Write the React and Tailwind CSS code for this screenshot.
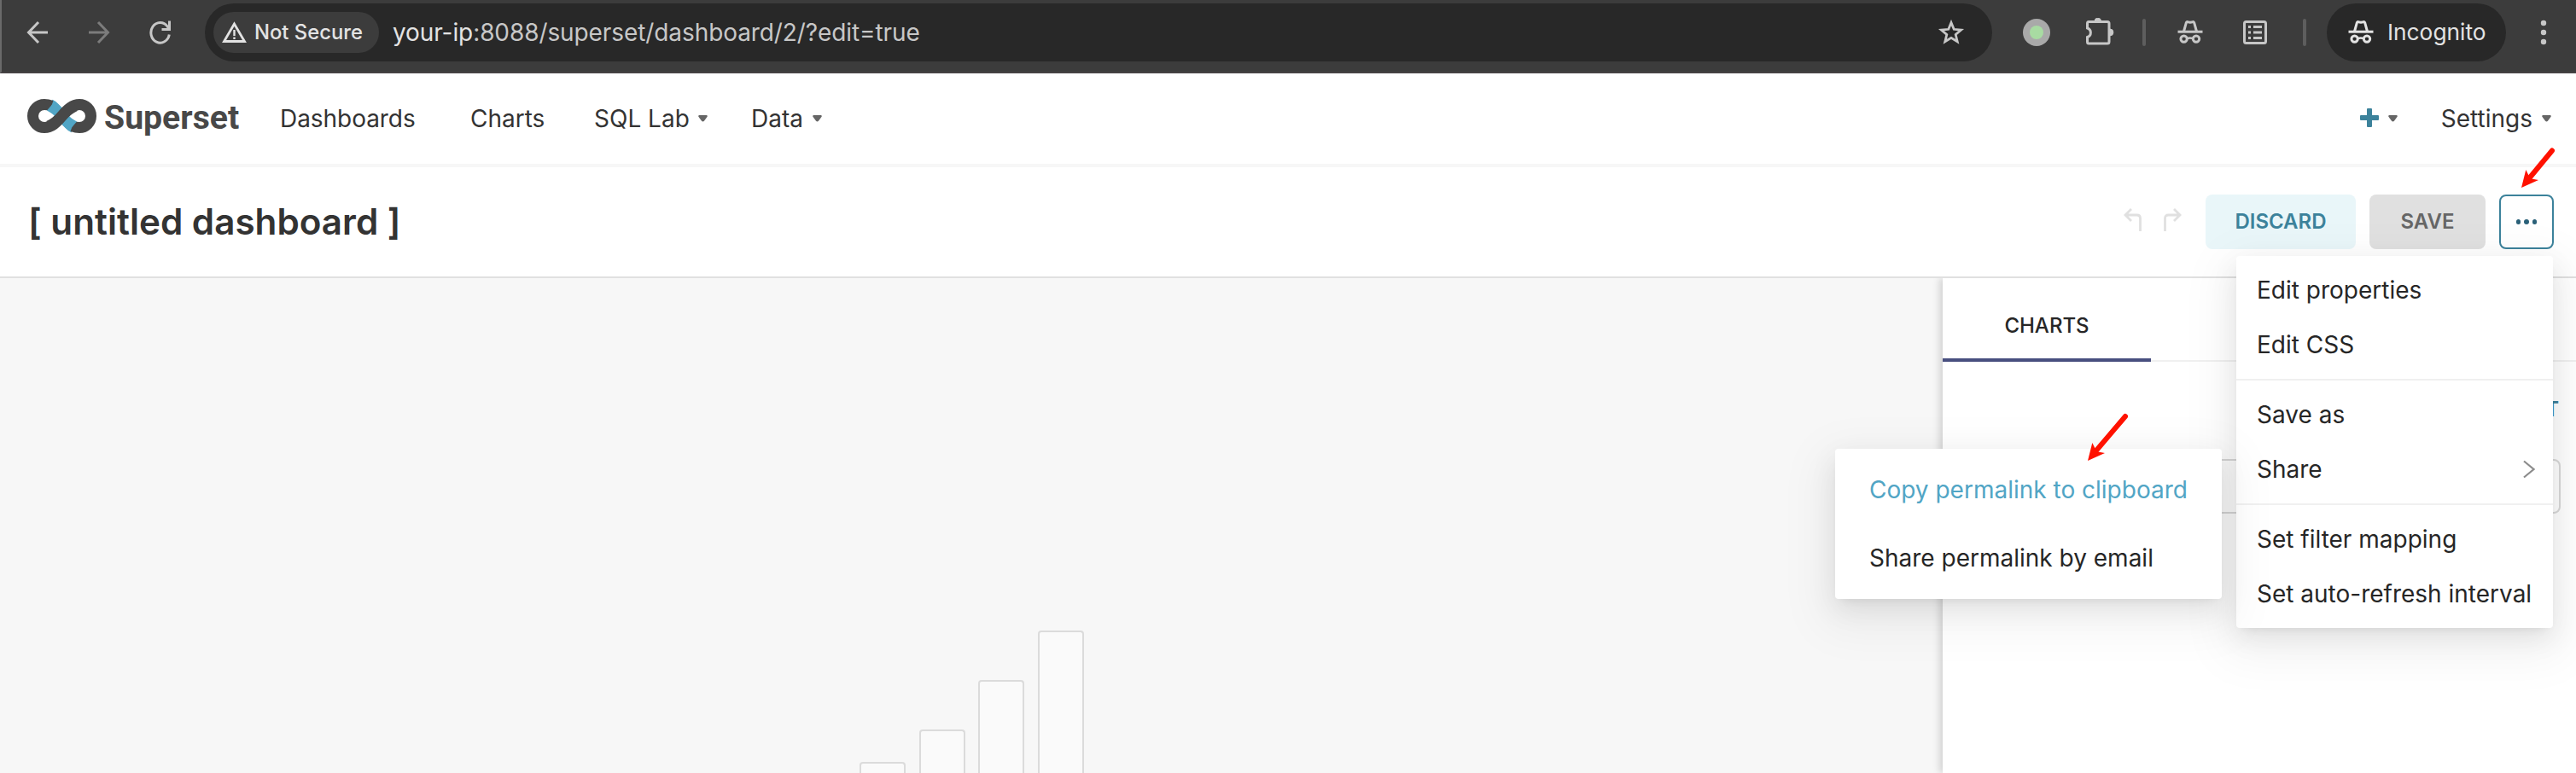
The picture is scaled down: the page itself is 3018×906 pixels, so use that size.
const font = "font-['Inter','Liberation_Sans',sans-serif]";

function Caret({ className = "" }) {
  return (
    <svg width="11" height="8" viewBox="0 0 12 8" preserveAspectRatio="none" className={`shrink-0 ${className}`}>
      <path d="M1.5 0h9c1 0 1.600 1 .9 2L7.600 6.800c-.8 1-2.400 1-3.200 0L.6 2C-.1 1 .5 0 1.500 0z" fill="#666" />
    </svg>
  );
}

function IncognitoIcon({ color, className = "" }) {
  return (
    <svg width="30" height="30" viewBox="0 0 30 30" fill="none" className={`shrink-0 ${className}`}>
      <path d="M0.5 14.200h29" stroke={color} strokeWidth="3" />
      <path d="M7.6 13.5 10.4 3.4c.3-.9 1-1 1.7-.7 2 .8 3.800.8 5.800 0 .7-.3 1.400-.2 1.700.7l2.800 10.100" stroke={color} strokeWidth="3" />
      <circle cx="7.600" cy="22.600" r="3.700" stroke={color} strokeWidth="3" />
      <circle cx="22" cy="22.600" r="3.700" stroke={color} strokeWidth="3" />
      <path d="M11 22.200c2.500-1 5-1 7.600 0" stroke={color} strokeWidth="2.600" />
    </svg>
  );
}

function BrowserBar() {
  return (
    <div className="flex h-[86px] shrink-0 items-start border-b-2 border-l-2 border-b-[#454243] border-l-[#6a6a6a] bg-[#3c3c3c] pt-1">
      <div className="flex h-[68px] w-[238px] shrink-0 items-center">
        <svg width="26" height="28" viewBox="0 0 26 28" fill="none" stroke="#c7c7c7" strokeWidth="3" className="ml-[29px]">
          <path d="M25 14H3M14 2 2.500 14 14 26" />
        </svg>
        <svg width="26" height="28" viewBox="0 0 26 28" fill="none" stroke="#7c7c7c" strokeWidth="3" className="ml-[46px]">
          <path d="M1 14h22M12 2l11.500 12L12 26" />
        </svg>
        <svg width="26" height="28" viewBox="0 0 26 28" fill="none" stroke="#c7c7c7" strokeWidth="3" className="ml-[46px]">
          <path d="M23.300 16.500A10.800 11.800 0 1 1 21 6.800L23.500 10M23.500 0.500V10.500H14.500" />
        </svg>
      </div>
      <div className="flex h-[68px] w-[2094px] shrink-0 items-center rounded-full bg-[#282828] pl-[10px]">
        <div className="flex h-12 w-[194px] items-center rounded-full bg-[#3c3c3c] pl-[10px]">
          <svg width="29" height="26" viewBox="0 0 29 26" fill="none" stroke="#e3e3e3" className="shrink-0">
            <path d="M14.500 3 2.500 23.500h24z" strokeWidth="2.800" />
            <path d="M14.500 10v7M14.500 18.500v2.500" strokeWidth="2.400" />
          </svg>
          <span className="ml-[9px] whitespace-nowrap text-[23.800px] font-medium text-[#e3e3e3]">Not Secure</span>
        </div>
        <div className="ml-4 grow whitespace-nowrap text-[28px] tracking-[-0.090px] text-[#c7c7c7]">
          <span className="text-[#e3e3e3]">your-ip</span>:8088/superset/dashboard/2/?edit=true
        </div>
        <svg width="32" height="32" viewBox="0 0 32 32" fill="none" stroke="#c7c7c7" strokeWidth="2.800" className="mr-8">
          <path d="M16 4.500l3.200 7.800 8.400.7-6.400 5.500 2 8.200-7.200-4.400-7.200 4.400 2-8.200-6.400-5.500 8.400-.7z" />
        </svg>
      </div>
      <div className="flex h-[68px] grow items-center">
        <div className="ml-9 flex size-8 shrink-0 items-center justify-center rounded-full bg-[#a9a9a9]">
          <div className="size-4 rounded-full bg-[#a8dba2]" />
        </div>
        <svg width="34" height="34" viewBox="0 0 34 34" fill="none" className="ml-[41px] shrink-0">
          <path d="M4 4.500h22q2 0 2 2V28q0 2-2 2H4q-1.500 0-1.500-2v-5.500a5.500 5.500 0 0 0 0-10.500V6.500q0-2 1.500-2z" stroke="#c7c7c7" strokeWidth="3" />
          <path d="M11 4a3.800 3.800 0 0 1 7.600 0zM29 13a3.900 3.900 0 0 1 0 7.800z" fill="#c7c7c7" stroke="#c7c7c7" />
        </svg>
        <div className="ml-[33px] h-8 w-1 rounded-sm bg-[#5e5e5e]" />
        <IncognitoIcon color="#c7c7c7" className="ml-[37px]" />
        <svg width="28" height="28" viewBox="0 0 28 28" fill="none" stroke="#c7c7c7" strokeWidth="3" className="ml-[47px] shrink-0">
          <rect x="1.500" y="1.500" width="25" height="25" rx="2" />
          <path d="M12 7.500h10M12 14h10M12 20.500h10M6 7.500h3M6 14h3M6 20.500h3" strokeWidth="2.800" />
        </svg>
        <div className="ml-[42px] h-8 w-1 rounded-sm bg-[#5e5e5e]" />
        <div className="ml-6 flex h-[68px] w-[210px] shrink-0 items-center rounded-full bg-[#282828] pl-[25px]">
          <IncognitoIcon color="#e3e3e3" />
          <span className="ml-4 text-[26.300px] text-[#e3e3e3]">Incognito</span>
        </div>
        <svg width="8" height="30" viewBox="0 0 8 30" fill="#c7c7c7" className="ml-10 shrink-0">
          <circle cx="4" cy="4" r="3.200" />
          <circle cx="4" cy="15" r="3.200" />
          <circle cx="4" cy="26" r="3.200" />
        </svg>
      </div>
    </div>
  );
}

function Logo() {
  return (
    <svg width="84" height="42" viewBox="0 0 84 42" fill="none" strokeWidth="13" className="mb-[6px] shrink-0">
      <path d="M27.500 7.500C33 10.500 37 15.500 41.500 21S50 31.500 55.500 34.500" stroke="#51a5c5" />
      <path d="M29.300 9C26.500 8 24 7.500 21 7.500a13.500 13.500 0 0 0 0 27C29.500 34.500 35 29 41.500 21S54 7.500 62 7.500a13.500 13.500 0 0 1 0 27C59 34.500 56.500 34 53.700 33" stroke="#484848" />
      <path d="M24 14.500 33.500 3.500 41 11 33 20zM59 27.500 49.500 38.500 42 31 50 22z" fill="#51a5c5" />
      <path d="M26 33C31.500 30.500 36 27.500 41.500 21S51.500 11.500 57 9" stroke="#484848" />
    </svg>
  );
}

function NavBar() {
  return (
    <div className="flex h-[110px] shrink-0 items-center border-b-4 border-[#f7f7f7] bg-white pl-[31px] text-[28px] text-[#333]">
      <div className="flex w-[297px] shrink-0 items-center pb-px">
        <Logo />
        <span className="ml-[7px] font-['Roboto','Liberation_Sans',sans-serif] text-[39.200px] leading-none font-bold text-[#484848]">Superset</span>
      </div>
      <div className="w-[223px] shrink-0 tracking-[-0.050px]">Dashboards</div>
      <div className="w-[145px] shrink-0">Charts</div>
      <div className="flex w-[184px] shrink-0 items-center">
        SQL Lab
        <Caret className="ml-[10px]" />
      </div>
      <div className="flex grow items-center">
        Data
        <Caret className="ml-[11px]" />
      </div>
      <svg width="22" height="22" viewBox="0 0 22 22" className="mb-[3px] shrink-0">
        <path d="M8 1q0-1 1-1h4q1 0 1 1v7h7q1 0 1 1v4q0 1-1 1h-7v7q0 1-1 1H9q-1 0-1-1v-7H1q-1 0-1-1V9q0-1 1-1h7z" fill="#3c829b" />
      </svg>
      <Caret className="ml-[11px]" />
      <div className="mr-[29px] ml-[51px] flex items-center">
        Settings
        <Caret className="ml-[11px]" />
      </div>
    </div>
  );
}

function TitleBar() {
  return (
    <div className="z-20 flex h-[130px] shrink-0 items-center border-b-2 border-[#e0e0e0] bg-white pr-[26px] pl-[33px]">
      <h1 className="grow text-[42.200px] font-semibold text-[#333]">[ untitled dashboard ]</h1>
      <svg width="22" height="28" viewBox="0 0 22 28" fill="none" stroke="#e0e0e0" strokeWidth="2.800" className="mr-6 mb-1 shrink-0">
        <path d="M9 1 2 8l7 7M2 8h13.500q4 0 4 4v15" />
      </svg>
      <svg width="22" height="28" viewBox="0 0 22 28" fill="none" stroke="#e0e0e0" strokeWidth="2.800" className="mr-[28px] mb-1 shrink-0">
        <path d="M13 1l7 7-7 7M20 8H6.500q-4 0-4 4v15" />
      </svg>
      <div className="flex h-16 w-44 shrink-0 items-center justify-center rounded-lg bg-[#e9f6f9] text-2xl font-semibold text-[#3c829b]">DISCARD</div>
      <div className="ml-4 flex h-16 w-[136px] shrink-0 items-center justify-center rounded-lg bg-[#e0e0e0] text-2xl font-semibold text-[#666]">SAVE</div>
      <div className="ml-4 flex h-16 w-16 shrink-0 items-center justify-center gap-[4px] rounded-lg border-2 border-[#3c829b]">
        <i className="size-[5.500px] rounded-full bg-[#2a6078]" />
        <i className="size-[5.500px] rounded-full bg-[#2a6078]" />
        <i className="size-[5.500px] rounded-full bg-[#2a6078]" />
      </div>
    </div>
  );
}

function Canvas() {
  return (
    <div className="flex h-full w-[2276px] shrink-0 items-end gap-[15.600px] overflow-hidden bg-[#f7f7f7] pl-[1007px]">
      <div className="h-[13px] w-[54px] rounded-t-sm border-2 border-b-0 border-[#dbdbdb] bg-[#fafafa]" />
      <div className="h-[51px] w-[54px] rounded-t-sm border-2 border-b-0 border-[#dbdbdb] bg-[#fafafa]" />
      <div className="h-[109px] w-[54px] rounded-t-sm border-2 border-b-0 border-[#dbdbdb] bg-[#fafafa]" />
      <div className="h-[167px] w-[54px] rounded-t-sm border-2 border-b-0 border-[#dbdbdb] bg-[#fafafa]" />
    </div>
  );
}

function SidePanel() {
  return (
    <div className="z-10 flex grow flex-col bg-white shadow-[-4px_0_8px_0_rgba(0,0,0,0.14)]">
      <div className="flex h-[98px] shrink-0 border-b-2 border-[#f0f0f0]">
        <div className="-mb-0.5 flex h-[98px] w-[244px] items-center justify-center border-b-4 border-[#484f7f] pt-[18px] text-2xl font-medium text-[#262626]">CHARTS</div>
      </div>
      <div className="mt-[40px] flex h-8 justify-end pr-[20px] text-2xl leading-8 font-semibold whitespace-nowrap text-[#3c829b]">CREATE NEW CHART</div>
      <div className="mt-[42px] mr-[18px] ml-8 h-16 rounded-lg border-2 border-[#d9d9d9]" />
    </div>
  );
}

const menuItem = "flex h-16 items-center pl-6";
const popup =
  "absolute rounded bg-white py-2 text-[28px] whitespace-nowrap text-[#262626] shadow-[0_6px_12px_-8px_rgba(0,0,0,0.12),0_12px_32px_rgba(0,0,0,0.08),0_18px_56px_16px_rgba(0,0,0,0.05)]";

function Menu() {
  return (
    <div className={`${popup} top-[300px] left-[2620px] z-20 w-[371px]`}>
      <div className={menuItem}>Edit properties</div>
      <div className={menuItem}>Edit CSS</div>
      <div className="my-2 h-0.5 bg-[#f0f0f0]" />
      <div className={menuItem}>Save as</div>
      <div className="flex h-16 items-center justify-between pr-[21px] pl-6">
        Share
        <svg width="14" height="22" viewBox="0 0 14 22" fill="none" stroke="#8c8c8c" strokeWidth="2.200">
          <path d="M1 1.500 12.500 11 1 20.500" />
        </svg>
      </div>
      <div className="my-2 h-0.5 bg-[#f0f0f0]" />
      <div className={menuItem}>Set filter mapping</div>
      <div className={menuItem}>Set auto-refresh interval</div>
    </div>
  );
}

function SubMenu() {
  return (
    <div className={`${popup} top-[526px] left-[2150px] z-30 w-[453px]`}>
      <div className="flex h-20 items-center pl-10 text-[#51a5c5]">Copy permalink to clipboard</div>
      <div className="flex h-20 items-center pl-10">Share permalink by email</div>
    </div>
  );
}

function ArrowHead() {
  return <path d="M0 56 5.300 35 9.500 43.500 12 45.500 20 47z" fill="#ff1100" />;
}

export default function App() {
  return (
    <div className={`relative flex h-[906px] w-[3018px] flex-col overflow-hidden bg-white ${font}`}>
      <BrowserBar />
      <NavBar />
      <TitleBar />
      <div className="flex min-h-0 grow">
        <Canvas />
        <SidePanel />
      </div>
      <Menu />
      <SubMenu />
      <svg width="48" height="56" viewBox="0 0 48 56" className="absolute top-[164px] left-[2954px] z-40">
        <path d="M36 12.500 10 44" stroke="#ff1100" strokeWidth="6" strokeLinecap="round" />
        <ArrowHead />
      </svg>
      <svg width="48" height="56" viewBox="0 0 48 56" className="absolute top-[484px] left-[2446px] z-40">
        <path d="M44 4 10 44" stroke="#ff1100" strokeWidth="6" strokeLinecap="round" />
        <ArrowHead />
      </svg>
    </div>
  );
}
